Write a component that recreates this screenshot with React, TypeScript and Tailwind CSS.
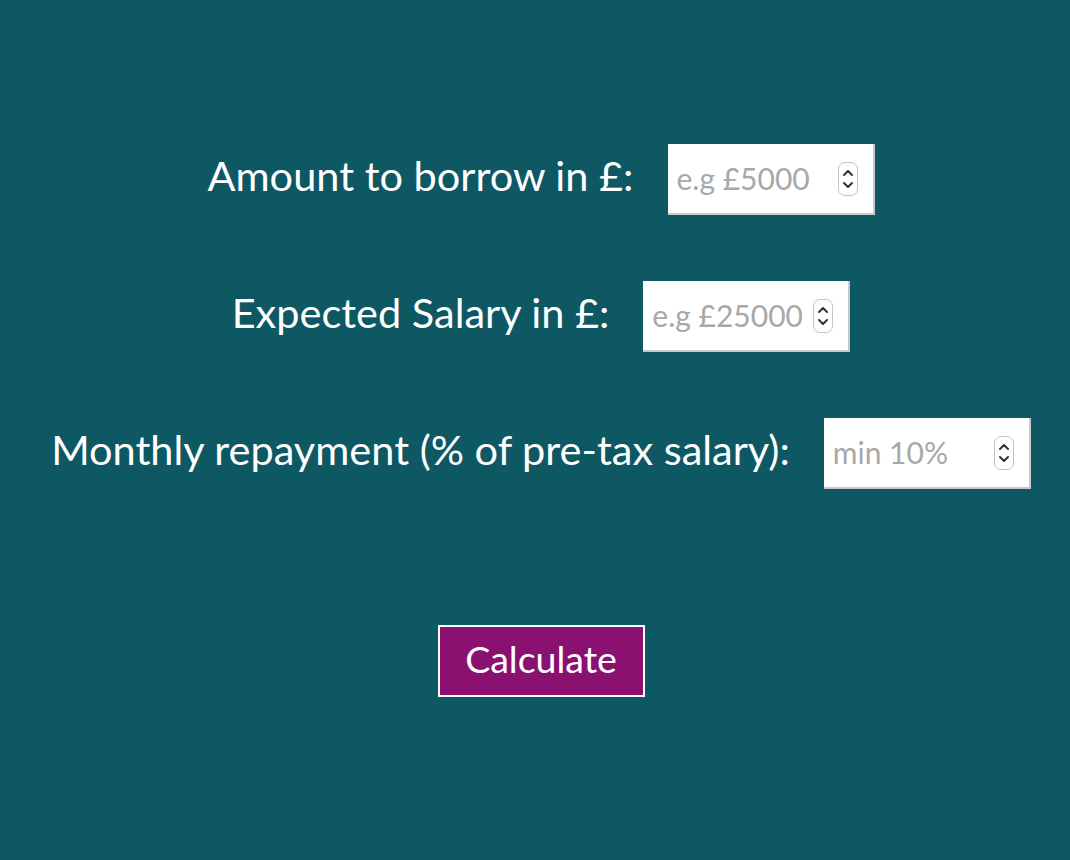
import React from "react";

function Spinner() {
  return (
    <div className="flex h-[34px] w-[20px] shrink-0 flex-col items-center justify-center rounded-[7px] border border-[#c4c4c4] bg-white">
      <svg width="14" height="28" viewBox="0 0 14 28" fill="none" stroke="#333" strokeWidth="2" strokeLinecap="round" strokeLinejoin="round">
        <path d="M3 10 L7 6 L11 10" />
        <path d="M3 18 L7 22 L11 18" />
      </svg>
    </div>
  );
}

function Field({ label, placeholder }: { label: string; placeholder: string }) {
  return (
    <div className="flex items-center justify-center gap-[34px]">
      <label className="mb-[8px] text-[41.5px] leading-none text-white">{label}</label>
      <div className="flex h-[71px] w-[207px] items-center justify-between border-b-2 border-r-2 border-[#c9c9c9] bg-white pl-[9px] pr-[15px]">
        <input
          type="text"
          placeholder={placeholder}
          className="w-[150px] bg-transparent text-[30px] text-[#333] outline-none placeholder:text-[#a8a8a8]"
        />
        <Spinner />
      </div>
    </div>
  );
}

export default function App() {
  return (
    <div
      className="flex h-[860px] w-full flex-col items-center bg-[#0e5864] pl-[12px] pt-[144px]"
      style={{ fontFamily: "Lato, 'Open Sans', sans-serif" }}
    >
      <div className="flex flex-col items-center gap-[66px]">
        <Field label="Amount to borrow in £:" placeholder="e.g £5000" />
        <Field label="Expected Salary in £:" placeholder="e.g £25000" />
        <Field label="Monthly repayment (% of pre-tax salary):" placeholder="min 10%" />
      </div>
      <button className="mt-[136px] h-[72px] w-[207px] border-2 border-white bg-[#8b1171] pb-[4px] text-[37.5px] text-white">
        Calculate
      </button>
    </div>
  );
}
